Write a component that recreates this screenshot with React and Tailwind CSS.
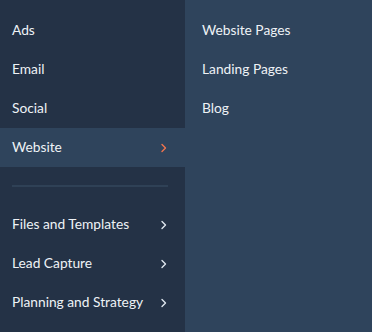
import React from "react";

const Chevron = ({ color = "#eaf0f6" }) => (
  <svg width="6" height="10" viewBox="0 0 6 10" fill="none">
    <path d="M1 1.5 L4.5 5 L1 8.5" stroke={color} strokeWidth="1.4" strokeLinecap="round" strokeLinejoin="round" />
  </svg>
);

const Row = ({ label, active, chevron }) => (
  <div className={`flex h-[39px] items-center justify-between pl-3 pr-[18px] ${active ? "bg-[#2f445c]" : ""}`}>
    <span>{label}</span>
    {chevron && <Chevron color={active ? "#f2754e" : "#dfe6ee"} />}
  </div>
);

export default function App() {
  return (
    <div
      className="flex h-[332px] w-[372px] text-[13.75px] text-[#eef2f6]"
      style={{ fontFamily: "Lato, 'Noto Sans', sans-serif" }}
    >
      <div className="flex w-[185px] flex-col bg-[#243246] pt-[11px]">
        <Row label="Ads" />
        <Row label="Email" />
        <Row label="Social" />
        <Row label="Website" active chevron />
        <div className="mx-3 mt-[18px] mb-[18px] h-[2px] w-[156px] bg-[#2f4156]" />
        <Row label="Files and Templates" chevron />
        <Row label="Lead Capture" chevron />
        <Row label="Planning and Strategy" chevron />
      </div>
      <div className="flex flex-1 flex-col bg-[#2f445c] pt-[11px]">
        <div className="flex h-[39px] items-center pl-[17px]">Website Pages</div>
        <div className="flex h-[39px] items-center pl-[17px]">Landing Pages</div>
        <div className="flex h-[39px] items-center pl-[17px]">Blog</div>
      </div>
    </div>
  );
}
